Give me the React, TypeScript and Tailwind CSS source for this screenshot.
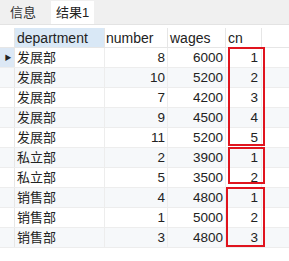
import React from 'react';

interface Row {
  department: string;
  number: number;
  wages: number;
  cn: number;
}

const rows: Row[] = [
  { department: '发展部', number: 8, wages: 6000, cn: 1 },
  { department: '发展部', number: 10, wages: 5200, cn: 2 },
  { department: '发展部', number: 7, wages: 4200, cn: 3 },
  { department: '发展部', number: 9, wages: 4500, cn: 4 },
  { department: '发展部', number: 11, wages: 5200, cn: 5 },
  { department: '私立部', number: 2, wages: 3900, cn: 1 },
  { department: '私立部', number: 5, wages: 3500, cn: 2 },
  { department: '销售部', number: 4, wages: 4800, cn: 1 },
  { department: '销售部', number: 1, wages: 5000, cn: 2 },
  { department: '销售部', number: 3, wages: 4800, cn: 3 },
];

const font = { fontFamily: '"Liberation Sans", "Noto Sans CJK SC", sans-serif' };

const App = () => {
  return (
    <div className="w-[289px] h-[261px] bg-white text-[13.5px] text-[#222] overflow-hidden" style={font}>
      {/* tabs */}
      <div className="flex items-end h-[25px] bg-[#f0f0f0] border-b border-[#e3e3e3] pl-[7px] text-[13px]">
        <div className="px-[3px] h-[22px] leading-[22px] text-[#333]">信息</div>
        <div className="ml-[12px] px-[5px] h-[23px] leading-[23px] bg-white">结果1</div>
      </div>

      <div className="relative mt-[3px]">
        {/* header */}
        <div className="flex h-[20px] leading-[20px] border-b border-[#e6e6e6] text-[14px]">
          <div className="w-[15px] shrink-0 border-r border-[#e6e6e6]" />
          <div className="w-[90px] shrink-0 pl-[2px] bg-[#d9e8f6] border-r border-[#e6e6e6]">department</div>
          <div className="w-[63px] shrink-0 pl-[1px] border-r border-[#e6e6e6]">number</div>
          <div className="w-[58px] shrink-0 pl-[2px] border-r border-[#e6e6e6]">wages</div>
          <div className="w-[36px] shrink-0 pl-[2px] border-r border-[#e6e6e6]">cn</div>
        </div>

        {rows.map((r, i) => (
          <div
            key={i}
            className={`flex h-[20px] leading-[20px] border-b border-[#ededed] ${i % 2 === 1 ? 'bg-[#f6f8fa]' : 'bg-white'}`}
          >
            <div className={`w-[15px] shrink-0 border-r border-[#e6e6e6] flex items-center justify-center ${i === 0 ? 'bg-[#dce8f5]' : ''}`}>
              {i === 0 && <span className="text-[7px] text-[#222] ml-[2px]">▶</span>}
            </div>
            <div className="w-[90px] shrink-0 pl-[2px] text-[13px] border-r border-[#ededed]">{r.department}</div>
            <div className="w-[63px] shrink-0 pr-[2px] text-right border-r border-[#ededed]">{r.number}</div>
            <div className="w-[58px] shrink-0 pr-[2px] text-right border-r border-[#ededed]">{r.wages}</div>
            <div className="w-[36px] shrink-0 pr-[3px] text-right border-r border-[#ededed]">{r.cn}</div>
          </div>
        ))}

        {/* highlight boxes */}
        <div className="absolute left-[228px] top-[19px] w-[37px] h-[99px] border-2 border-[#e0141e]" />
        <div className="absolute left-[228px] top-[119px] w-[37px] h-[37px] border-2 border-[#e0141e]" />
        <div className="absolute left-[226px] top-[159px] w-[39px] h-[60px] border-2 border-[#e0141e]" />
      </div>
    </div>
  );
};

export default App;
